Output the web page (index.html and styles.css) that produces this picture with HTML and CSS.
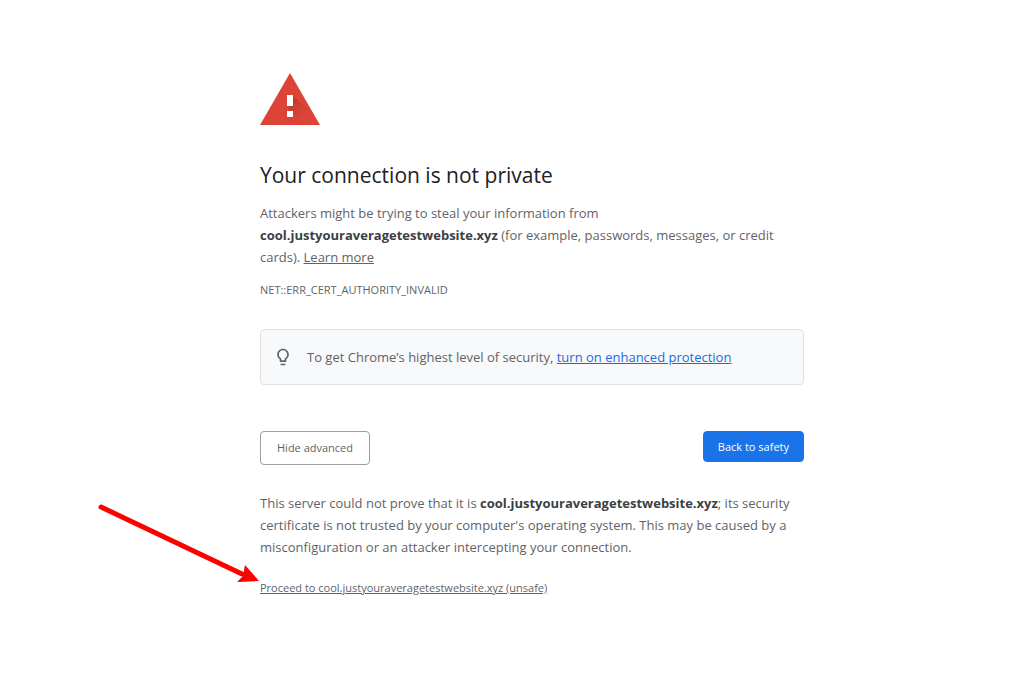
FILE: index.html
```html
<!DOCTYPE html>
<html lang="en">
<head>
<meta charset="utf-8">
<meta name="viewport" content="width=device-width, initial-scale=1">
<title>Privacy error</title>
<link rel="stylesheet" href="styles.css">
</head>
<body>
<main class="warning">
  <svg class="warning-icon" viewBox="0 0 60 52" aria-hidden="true">
    <defs>
      <linearGradient id="shade" gradientUnits="userSpaceOnUse" x1="32" y1="30" x2="46" y2="44">
        <stop offset="0" stop-color="#a92d23" stop-opacity=".5"/>
        <stop offset="1" stop-color="#db4437" stop-opacity="0"/>
      </linearGradient>
    </defs>
    <path fill="#db4437" d="M30 0L60 52H0z"/>
    <path fill="url(#shade)" d="M32 22L45 34L54 42L60 52H35L27 43z"/>
    <path fill="#fff" d="M27 22h6v11h-6zM27 38h6v6h-6z"/>
  </svg>
  <h1 class="title">Your connection is not private</h1>
  <p class="text">Attackers might be trying to steal your information from <strong>cool.justyouraveragetestwebsite.xyz</strong> (for example, passwords, messages, or credit cards). <a href="#learn">Learn more</a></p>
  <p class="error-code">NET::ERR_CERT_AUTHORITY_INVALID</p>
  <section class="tip">
    <svg class="tip-icon" viewBox="0 0 24 24" aria-hidden="true">
      <path fill="#5f6368" d="M9 21c0 .55.45 1 1 1h4c.55 0 1-.45 1-1v-1H9v1zm3-19C8.14 2 5 5.14 5 9c0 2.38 1.19 4.47 3 5.74V17c0 .55.45 1 1 1h6c.55 0 1-.45 1-1v-2.26c1.81-1.27 3-3.36 3-5.74 0-3.860-3.140-7-7-7zm2.850 11.100l-.85.6V16h-4v-2.300l-.85-.6A4.997 4.997 0 0 1 7 9c0-2.760 2.240-5 5-5s5 2.240 5 5c0 1.630-.8 3.160-2.150 4.100z"/>
    </svg>
    <p class="tip-text">To get Chrome’s highest level of security, <a class="tip-link" href="#protection">turn on enhanced protection</a></p>
  </section>
  <div class="actions">
    <button class="button" type="button">Hide advanced</button>
    <button class="button button-primary" type="button">Back to safety</button>
  </div>
  <p class="text">This server could not prove that it is <strong>cool.justyouraveragetestwebsite.xyz</strong>; its security certificate is not trusted by your computer's operating system. This may be caused by a misconfiguration or an attacker intercepting your connection.</p>
  <p class="proceed">
    <svg class="arrow" viewBox="0 0 162 80" aria-hidden="true">
      <path fill="none" stroke="#f00" stroke-width="5" stroke-linecap="round" d="M3 3L144 70"/>
      <path fill="#f00" d="M147 61L161 77L139 78L145 72z"/>
    </svg>
    <a href="#proceed">Proceed to cool.justyouraveragetestwebsite.xyz (unsafe)</a>
  </p>
</main>
</body>
</html>
```
FILE: styles.css
```css
* {
  box-sizing: border-box;
}

body {
  margin: 0;
  background: #fff;
  color: #5f6368;
  font-family: "Open Sans", "Noto Sans", sans-serif;
  font-size: 13px;
  line-height: 22px;
}

h1,
p {
  margin: 0;
}

a {
  color: inherit;
}

strong {
  color: #3c4043;
}

.warning {
  max-width: 584px;
  margin: 0 auto;
  padding: 73px 0 40px 40px;
}

.warning-icon {
  display: block;
  width: 60px;
  height: 52px;
}

.title {
  margin: 35px 0 12px;
  color: #202124;
  font-size: 21px;
  font-weight: 400;
  line-height: 30px;
}

.error-code {
  margin-top: 12px;
  font-size: 11px;
  line-height: 20px;
}

.tip {
  display: flex;
  align-items: center;
  gap: 14px;
  margin: 29px 0 46px;
  padding: 16px 12px;
  border: 1px solid #dfe1e5;
  border-radius: 4px;
  background: #f8f9fb;
}

.tip-icon {
  width: 20px;
  height: 20px;
}

.tip-link {
  color: #1a6ae0;
}

.actions {
  display: flex;
  align-items: flex-start;
  justify-content: space-between;
  margin-bottom: 27px;
}

.button {
  padding: 6px 16px;
  border: 1px solid #9aa0a6;
  border-radius: 4px;
  background: #fff;
  color: #5f6368;
  font-family: inherit;
  font-size: 11px;
  line-height: 20px;
}

.button-primary {
  padding: 5px 14px;
  border-color: #1a73e8;
  background: #1a73e8;
  color: #fff;
  line-height: 19px;
}

.proceed {
  position: relative;
  margin-top: 19px;
  font-size: 11px;
}

.arrow {
  position: absolute;
  top: -73px;
  left: -162px;
  width: 162px;
  height: 80px;
}
```
